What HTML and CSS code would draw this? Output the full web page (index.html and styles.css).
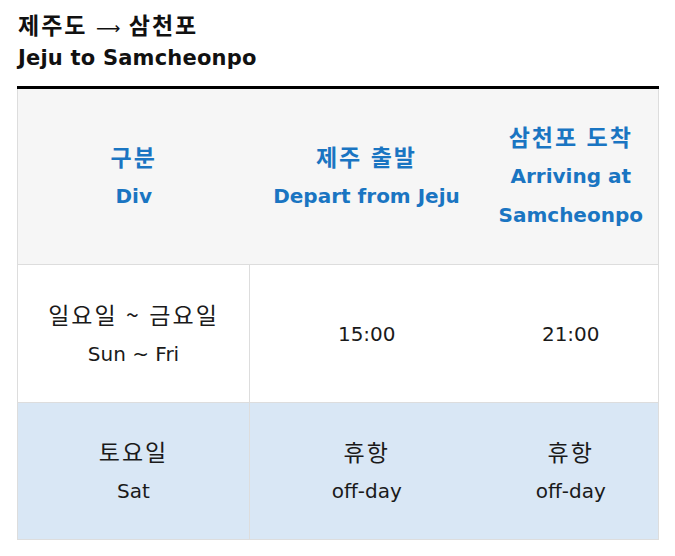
FILE: index.html
```html
<!DOCTYPE html>
<html lang="ko">
<head>
<meta charset="utf-8">
<title>Jeju to Samcheonpo</title>
<link rel="stylesheet" href="styles.css">
</head>
<body>
<div class="wrap">
  <h2 class="title">
    <span class="ln"><span class="ko">제주도 <span class="arrow">⟶</span> 삼천포</span></span>
    <span class="ln">Jeju to Samcheonpo</span>
  </h2>
  <table class="timetable">
    <colgroup>
      <col class="c1">
      <col class="c2">
      <col class="c3">
    </colgroup>
    <thead>
      <tr>
        <th><span class="ln ko">구분</span><span class="ln">Div</span></th>
        <th><span class="ln ko">제주 출발</span><span class="ln">Depart from Jeju</span></th>
        <th><span class="ln ko">삼천포 도착</span><span class="ln">Arriving at</span><span class="ln">Samcheonpo</span></th>
      </tr>
    </thead>
    <tbody>
      <tr class="weekday">
        <td class="first"><span class="ln ko">일요일 ~ 금요일</span><span class="ln">Sun ~ Fri</span></td>
        <td><span class="ln">15:00</span></td>
        <td><span class="ln">21:00</span></td>
      </tr>
      <tr class="off">
        <td class="first"><span class="ln ko">토요일</span><span class="ln">Sat</span></td>
        <td><span class="ln ko">휴항</span><span class="ln">off-day</span></td>
        <td><span class="ln ko">휴항</span><span class="ln">off-day</span></td>
      </tr>
    </tbody>
  </table>
</div>
</body>
</html>
```
FILE: styles.css
```css
html, body {
  margin: 0;
  padding: 0;
  background: #ffffff;
}
body {
  font-family: "DejaVu Sans", "Noto Sans CJK KR", sans-serif;
  color: #1a1a1a;
}
.wrap {
  width: 641px;
  margin-left: 17px;
  padding-top: 7px;
}
.ln {
  display: block;
  white-space: nowrap;
}
.ko {
  font-family: "Noto Sans CJK KR", "DejaVu Sans", sans-serif;
  font-size: 23px;
  letter-spacing: 2px;
}
.title .ko {
  letter-spacing: 2px;
}
.arrow {
  font-family: "DejaVu Sans", sans-serif;
  font-weight: 400;
  font-size: 17px;
  letter-spacing: 0;
}
.title {
  margin: 0 0 11px 1px;
  font-size: 21px;
  font-weight: 700;
  color: #111111;
}
.title .ln {
  height: 34px;
  line-height: 34px;
  letter-spacing: 0.2px;
}
.timetable {
  width: 641px;
  border-collapse: collapse;
  table-layout: fixed;
  border-top: 3px solid #000000;
}
.c1 { width: 232px; }
.c2 { width: 234px; }
.c3 { width: 175px; }
.timetable th,
.timetable td {
  text-align: center;
  vertical-align: middle;
  font-size: 20px;
  border-bottom: 1px solid #dddddd;
  padding: 0 4px;
}
.timetable th {
  background: #f6f6f6;
  color: #1a75c2;
  font-weight: 700;
  height: 177px;
  box-sizing: border-box;
}
.timetable th .ln {
  height: 39.5px;
  line-height: 39.5px;
}
.timetable td {
  font-weight: 400;
  color: #1a1a1a;
}
.timetable td .ln {
  height: 40px;
  line-height: 40px;
}
.timetable td .ko {
  font-weight: 400;
}
.weekday td {
  height: 137px;
}
.off td {
  height: 136px;
  background: #d9e7f5;
}
.timetable th:first-child,
.timetable td:first-child {
  border-left: 1px solid #dddddd;
}
.timetable th:last-child,
.timetable td:last-child {
  border-right: 1px solid #dddddd;
}
.timetable td.first {
  border-right: 1px solid #dddddd;
}
```
